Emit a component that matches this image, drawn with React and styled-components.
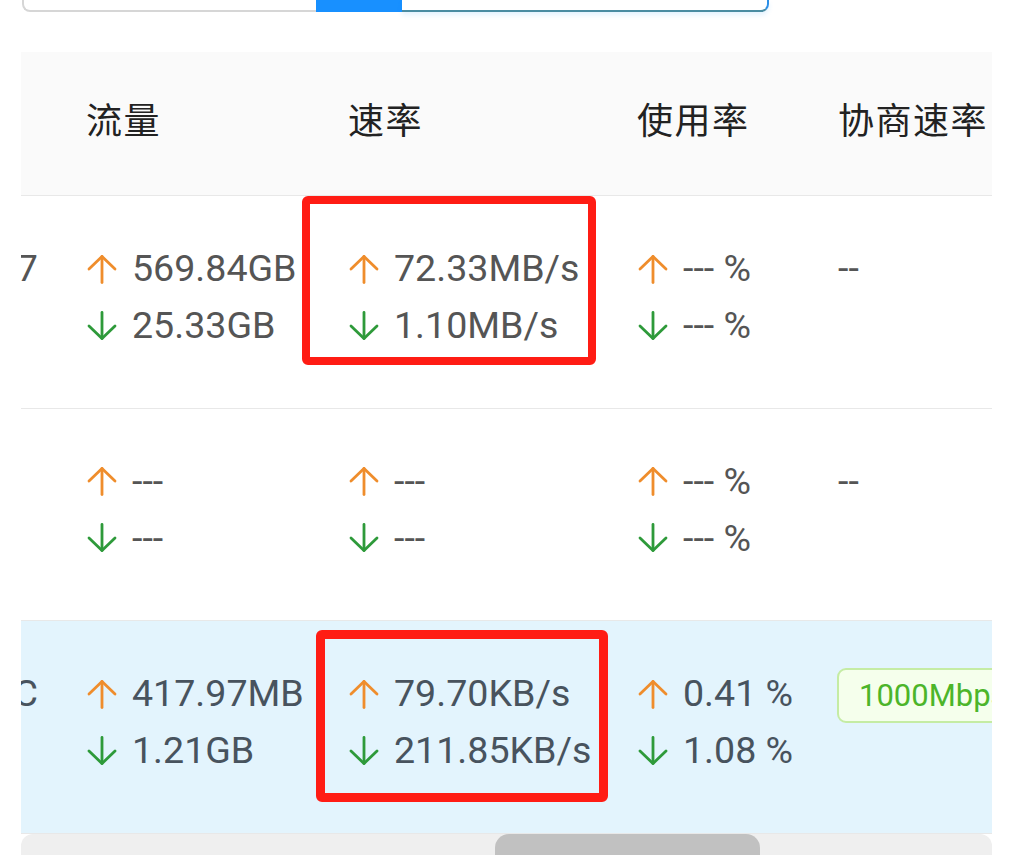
import React from 'react'
import styled, { createGlobalStyle } from 'styled-components'

const GlobalStyle = createGlobalStyle`
  html, body {
    margin: 0;
    padding: 0;
    background: #fff;
    overflow: hidden;
  }
  body {
    font-family: Roboto, "Noto Sans CJK SC", sans-serif;
  }
`;

const COLS = '41px 262px 289px 201px 260px';

const Page = styled.div`
  position: relative;
  width: 1012px;
  height: 855px;
  padding-left: 21px;
  box-sizing: border-box;
`;

const TopBar = styled.div`
  display: flex;
  width: 747px;
  height: 12px;
  margin-left: 1px;
  margin-bottom: 40px;
`;

const TopLeft = styled.div`
  width: 292px;
  border-left: 2px solid #d6d6d6;
  border-bottom: 2px solid #d6d6d6;
  border-bottom-left-radius: 8px;
`;

const TopButton = styled.div`
  width: 86px;
  background: #1890ff;
`;

const TopRight = styled.div`
  flex: 1;
  border-right: 2px solid #2b8fe8;
  border-bottom: 2px solid #4a8ca2;
  border-bottom-right-radius: 8px;
  box-shadow: 0 3px 5px rgba(24, 144, 255, 0.12);
`;

const Table = styled.div`
  width: 971px;
  overflow: hidden;
`;

const HeadRow = styled.div`
  display: grid;
  grid-template-columns: ${COLS};
  height: 144px;
  background: #fafafa;
  border-bottom: 1px solid #e8e8e8;
  box-sizing: border-box;
  align-items: center;
`;

const HeadCell = styled.div`
  padding: 0 24px 12px;
  font-family: "Noto Sans CJK SC", sans-serif;
  font-size: 36px;
  font-weight: 400;
  letter-spacing: 1.5px;
  color: #222;
  white-space: nowrap;
`;

const Row = styled.div`
  display: grid;
  grid-template-columns: ${COLS};
  height: 212.7px;
  box-sizing: border-box;
  border-bottom: 1px solid #e8e8e8;
  background: ${(p) => (p.$active ? '#e3f4fd' : '#fff')};
  color: ${(p) => (p.$active ? '#48535e' : '#555')};
`;

const Cell = styled.div`
  padding: 44px 24px 0;
  font-size: 37.6px;
  line-height: 57px;
  white-space: nowrap;
`;

const NameCell = styled(Cell)`
  display: flex;
  justify-content: flex-end;
  align-items: flex-start;
  padding-left: 0;
  padding-right: 24px;
`;

const Line = styled.div`
  display: flex;
  align-items: center;
  height: 57px;
`;

const ArrowBox = styled.svg`
  width: 32px;
  height: 30px;
  margin-right: 14px;
  flex: none;
`;

const Tag = styled.span`
  display: inline-flex;
  align-items: center;
  height: 55px;
  box-sizing: border-box;
  padding: 0 20px;
  margin-left: -1px;
  margin-top: 1px;
  border: 2px solid #c5eca4;
  border-radius: 9px;
  background: #f5ffec;
  color: #4cb52a;
  font-size: 31px;
`;

const Track = styled.div`
  display: flex;
  width: 971px;
  height: 30px;
  background: #efefef;
  border-radius: 12px 12px 0 0;
`;

const Thumb = styled.div`
  width: 265px;
  margin-left: 474px;
  background: #c1c1c1;
  border-radius: 14px 14px 0 0;
`;

const Mark = styled.div`
  position: absolute;
  left: ${(p) => p.$x}px;
  top: ${(p) => p.$y}px;
  width: ${(p) => p.$w}px;
  height: ${(p) => p.$h}px;
  border: ${(p) => p.$b}px solid #ff1c14;
  border-radius: 6px;
  box-sizing: border-box;
`;

const Arrow = ({ up }) => (
  <ArrowBox viewBox="0 0 32 30">
    {up ? (
      <g fill="none" stroke="#ef8d2c" strokeWidth="2.8" strokeLinecap="round" strokeLinejoin="round">
        <path d="M16 2.5V28.5" />
        <path d="M3 15 16 2.5 29 15" />
      </g>
    ) : (
      <g fill="none" stroke="#2e9a3a" strokeWidth="2.8" strokeLinecap="round" strokeLinejoin="round">
        <path d="M16 1.5V27.5" />
        <path d="M3 15 16 27.5 29 15" />
      </g>
    )}
  </ArrowBox>
);

const Pair = ({ up, down }) => (
  <Cell>
    <Line>
      <Arrow up />
      {up}
    </Line>
    <Line>
      <Arrow />
      {down}
    </Line>
  </Cell>
);

const rows = [
  {
    name: 'port7',
    traffic: ['569.84GB', '25.33GB'],
    rate: ['72.33MB/s', '1.10MB/s'],
    usage: ['--- %', '--- %'],
    speed: '--',
  },
  {
    name: '',
    traffic: ['---', '---'],
    rate: ['---', '---'],
    usage: ['--- %', '--- %'],
    speed: '--',
  },
  {
    name: 'LAN-C',
    traffic: ['417.97MB', '1.21GB'],
    rate: ['79.70KB/s', '211.85KB/s'],
    usage: ['0.41 %', '1.08 %'],
    speed: '1000Mbps',
    tag: true,
    active: true,
  },
];

const App = () => {
  return (
    <Page>
      <GlobalStyle />
      <TopBar>
        <TopLeft />
        <TopButton />
        <TopRight />
      </TopBar>
      <Table>
        <HeadRow>
          <HeadCell />
          <HeadCell>流量</HeadCell>
          <HeadCell>速率</HeadCell>
          <HeadCell>使用率</HeadCell>
          <HeadCell>协商速率</HeadCell>
        </HeadRow>
        {rows.map((r, i) => (
          <Row key={i} $active={r.active}>
            <NameCell>{r.name}</NameCell>
            <Pair up={r.traffic[0]} down={r.traffic[1]} />
            <Pair up={r.rate[0]} down={r.rate[1]} />
            <Pair up={r.usage[0]} down={r.usage[1]} />
            <Cell>{r.tag ? <Tag>{r.speed}</Tag> : r.speed}</Cell>
          </Row>
        ))}
      </Table>
      <Track>
        <Thumb />
      </Track>
      <Mark $x={302} $y={196} $w={294} $h={169} $b={8} />
      <Mark $x={316} $y={630} $w={292} $h={172} $b={9} />
    </Page>
  )
}

export default App
